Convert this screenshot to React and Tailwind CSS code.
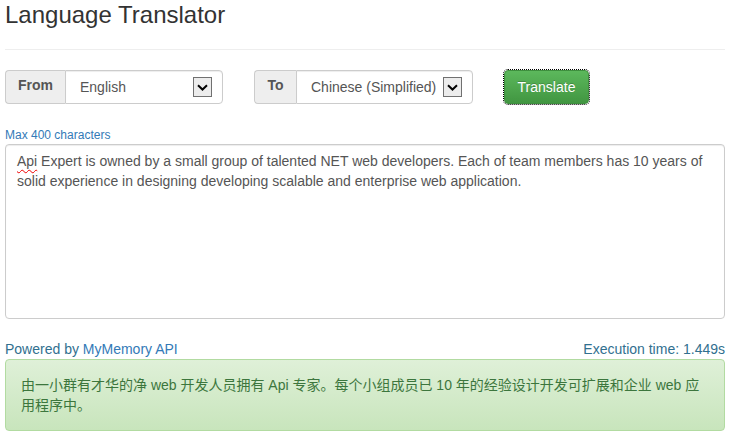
function ArrowBox() {
  return (
    <span className="ml-auto mr-[10px] flex h-[20px] w-[19px] items-center justify-center border border-[#707070] bg-[#ececec]">
      <svg width="11" height="7" viewBox="0 0 11 7" fill="none">
        <path d="M1 1.2 L5.5 5.5 L10 1.2" stroke="#000" strokeWidth="2" />
      </svg>
    </span>
  )
}

function LangPicker({ label, value, addonWidth, selectWidth }) {
  return (
    <div className="flex h-[34px]">
      <span className={`flex items-center justify-center pb-[3px] rounded-l-[4px] border border-r-0 border-[#ccc] bg-[#eee] text-[14px] font-bold text-[#555] ${addonWidth}`}>
        {label}
      </span>
      <div className={`flex items-center rounded-r-[4px] border border-[#ccc] bg-white pl-[14px] text-[14px] text-[#555] shadow-[inset_0_1px_1px_rgba(0,0,0,0.075)] ${selectWidth}`}>
        <span className="whitespace-nowrap">{value}</span>
        <ArrowBox />
      </div>
    </div>
  )
}

export default function App() {
  return (
    <div className="min-h-[442px] w-[731px] bg-white px-[5px] font-['Liberation_Sans','Noto_Sans_CJK_SC',sans-serif] text-[14px] text-[#333]">
      {/* title */}
      <h1 className="mt-[2px] h-[26px] text-[24px] leading-[26px] text-[#333]">Language Translator</h1>
      <div className="mt-[21px] w-[720px] border-t border-[#eee]" />

      {/* language row */}
      <div className="mt-[20px] flex items-center">
        <LangPicker label="From" value="English" addonWidth="w-[60px]" selectWidth="w-[158px]" />
        <div className="ml-[31px]">
          <LangPicker label="To" value="Chinese (Simplified)" addonWidth="w-[42px]" selectWidth="w-[177px]" />
        </div>
        <button className="ml-[31px] h-[34px] w-[85px] rounded-[4px] border border-[#3e8f3e] bg-[linear-gradient(to_bottom,#5cb85c,#419641)] text-[14px] text-white outline-1 outline-dotted outline-black [text-shadow:0_-1px_0_rgba(0,0,0,0.2)]">
          Translate
        </button>
      </div>

      {/* input */}
      <div className="mt-[23px] h-[17px] text-[12px] leading-[17px] text-[#337ab7]">Max 400 characters</div>
      <div className="h-[175px] w-[720px] rounded-[4px] border border-[#ccc] px-[11px] py-[6px] text-[14px] leading-[20px] text-[#555] shadow-[inset_0_1px_1px_rgba(0,0,0,0.075)]">
        <div className="whitespace-nowrap">
          <span className="underline decoration-wavy decoration-[#e00] decoration-1 underline-offset-[3px]">Api</span> Expert is owned by a small group of talented NET web developers. Each of team members has 10 years of
        </div>
        <div className="whitespace-nowrap">solid experience in designing developing scalable and enterprise web application.</div>
      </div>

      {/* footer */}
      <div className="mt-[20px] flex h-[20px] w-[720px] items-center justify-between leading-[20px]">
        <span className="text-[#31708f]">
          Powered by <span className="text-[#337ab7]">MyMemory API</span>
        </span>
        <span className="text-[#31708f]">Execution time: 1.449s</span>
      </div>

      {/* result */}
      <div className="w-[720px] rounded-[4px] border border-[#b2dba1] bg-[linear-gradient(to_bottom,#dff0d8,#c8e5bc)] p-[15px] leading-[20px] text-[#3c763d]">
        <div className="whitespace-nowrap">由一小群有才华的净 web 开发人员拥有 Api 专家。每个小组成员已 10 年的经验设计开发可扩展和企业 web 应</div>
        <div className="whitespace-nowrap">用程序中。</div>
      </div>
    </div>
  )
}
